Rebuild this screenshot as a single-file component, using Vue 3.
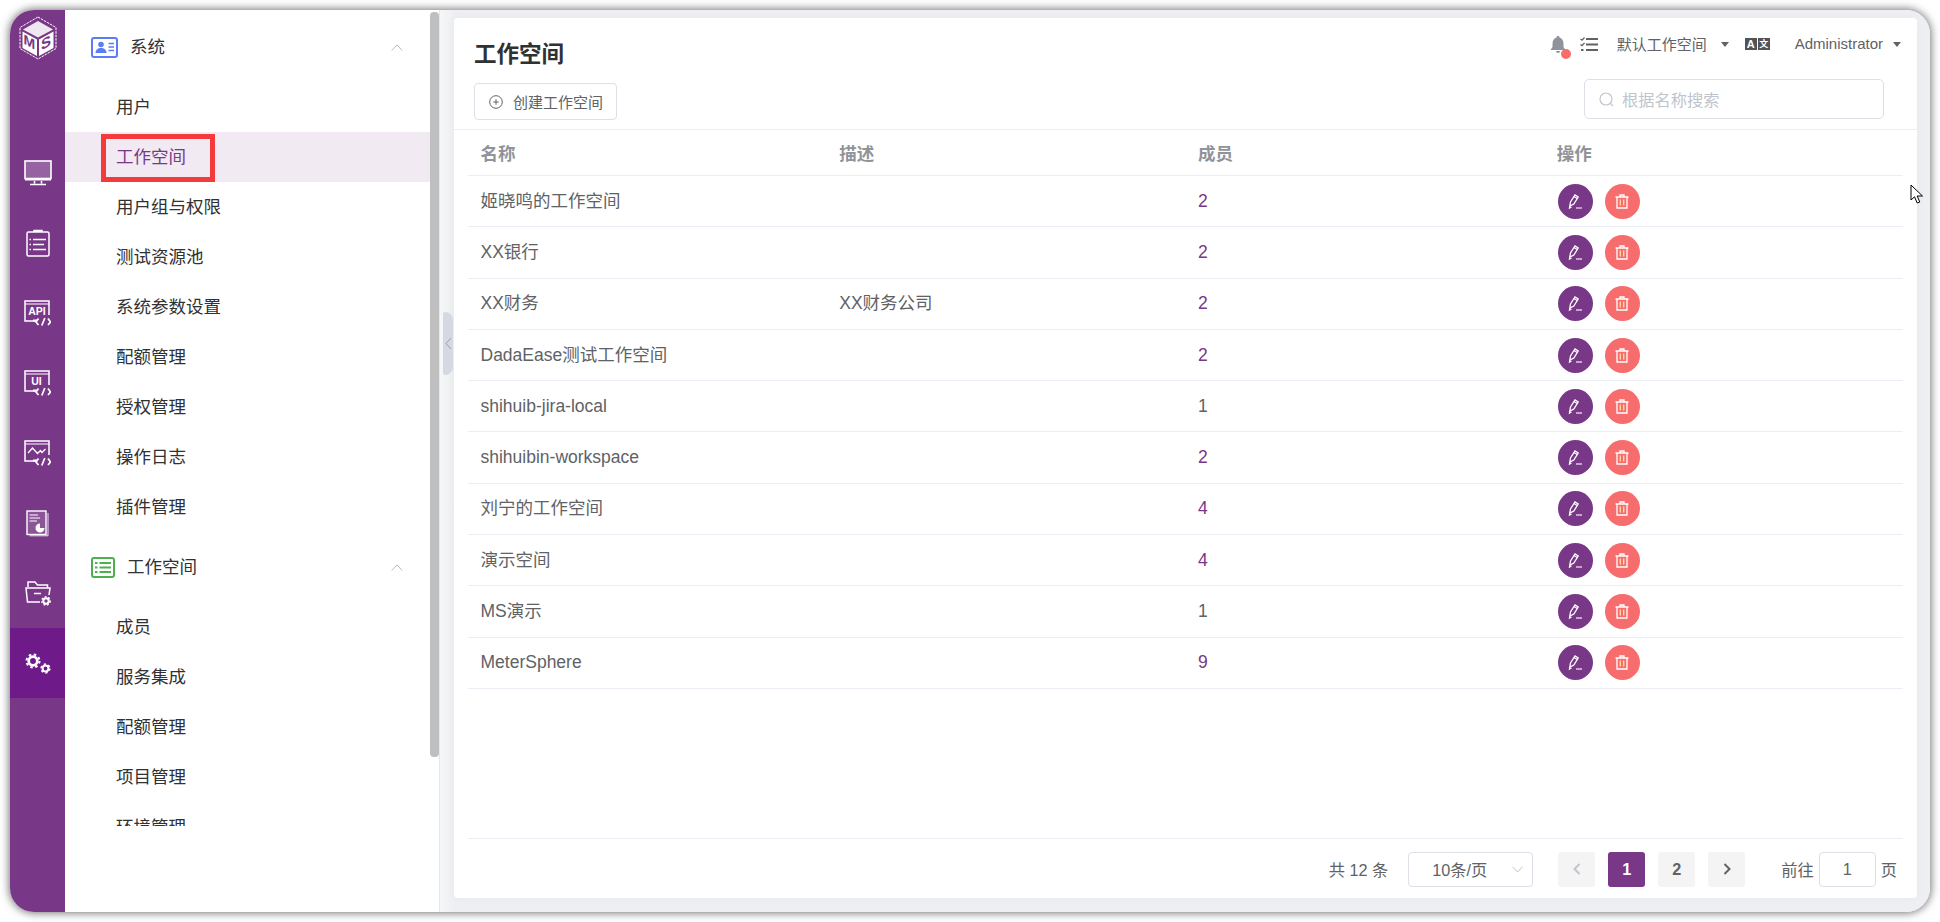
<script setup>
const railIcons = ['monitor', 'clip', 'api', 'ui', 'perf', 'report', 'folder', 'gear']
const group1 = ['用户', '工作空间', '用户组与权限', '测试资源池', '系统参数设置', '配额管理', '授权管理', '操作日志', '插件管理']
const group2 = ['成员', '服务集成', '配额管理', '项目管理', '环境管理']
const rows = [
  { name: '姬晓鸣的工作空间', desc: '', count: 2 },
  { name: 'XX银行', desc: '', count: 2 },
  { name: 'XX财务', desc: 'XX财务公司', count: 2 },
  { name: 'DadaEase测试工作空间', desc: '', count: 2 },
  { name: 'shihuib-jira-local', desc: '', count: 1 },
  { name: 'shihuibin-workspace', desc: '', count: 2 },
  { name: '刘宁的工作空间', desc: '', count: 4 },
  { name: '演示空间', desc: '', count: 4 },
  { name: 'MS演示', desc: '', count: 1 },
  { name: 'MeterSphere', desc: '', count: 9 }
]
const hasCjk = (text) => /[\u4e00-\u9fff]/.test(text)
</script>

<template>
  <div class="page">
    <div class="window">
      <nav class="rail">
        <div class="logo">
          <svg width="38" height="44" viewBox="0 0 38 44" fill="none" stroke="#fff">
            <path d="M19 1 37 11.500V32.500L19 43 1 32.500V11.500Z" stroke-width="1" stroke-dasharray="2.500 1" />
            <path d="M19 5 34 13.500 19 21.500 4 13.500Z" fill="#fff" fill-opacity=".88" stroke="none" />
            <path d="M3.500 15.500 18 23.500V40L3.500 32Z" fill="#fff" stroke="none" />
            <path d="M20 23.500 34.500 15.500V32L20 40Z" fill="#fff" stroke="none" />
            <text class="logo-text" transform="matrix(1 .55 0 1 4.500 27.500)">M</text>
            <text class="logo-text big" transform="matrix(1 -.55 0 1 22 34.600)">S</text>
          </svg>
        </div>
        <div v-for="icon in railIcons" :key="icon" class="rail-item" :class="{ active: icon === 'gear' }">
          <svg v-if="icon === 'monitor'" width="28" height="26" viewBox="0 0 28 26" fill="none" stroke="#fff" stroke-width="1.600">
            <rect x="1" y="1" width="26" height="17.500" fill="#fff" fill-opacity=".22" />
            <path d="M1 18.500H27V20.500H1Z" fill="#fff" stroke="none" />
            <path d="M10.500 21V23.500M17.500 21V23.500M6 24.500H22" />
          </svg>
          <svg v-else-if="icon === 'clip'" width="24" height="28" viewBox="0 0 24 28" fill="none" stroke="#fff" stroke-width="1.500">
            <rect x="1" y="3" width="22" height="24" rx="1.500" />
            <path d="M8 3V1.500H16V3" fill="#fff" />
            <path d="M7 10.500H20M7 15.500H18M7 20.500H20" />
            <path d="M3.500 10.500H5M3.500 15.500H5M3.500 20.500H5" />
          </svg>
          <svg v-else-if="icon === 'api' || icon === 'ui' || icon === 'perf'" width="27" height="26" viewBox="0 0 27 26" fill="none" stroke="#fff" stroke-width="1.500">
            <path d="M12 21H1V1H25V15" />
            <path d="M1 4H25" stroke-width="1" />
            <path d="M9 20.500H13" stroke-width="2" />
            <path d="M14.500 18.500 12 22 14.500 25M24 18.500 26.500 22 24 25M20.800 18 17.800 25.500" stroke-width="1.700" />
            <text v-if="icon === 'api'" x="13" y="14.800" class="rail-text" text-anchor="middle">API</text>
            <text v-else-if="icon === 'ui'" x="12.500" y="14.800" class="rail-text" text-anchor="middle">UI</text>
            <path v-else d="M4 13 8.500 8 13.500 13.500 16.500 10.500 18 12.500 21.500 9" stroke-width="1.300" />
          </svg>
          <svg v-else-if="icon === 'report'" width="24" height="27" viewBox="0 0 24 27" fill="none" stroke="#fff">
            <path d="M22 3V25.800H3.500" stroke-width="1" opacity=".85" />
            <rect x="1" y="1" width="19" height="23.500" stroke-width="1.400" fill="#fff" fill-opacity=".15" />
            <path d="M3.500 5H12M3.500 8H14M3.500 11H11" stroke-width="1.200" />
            <path d="M14 13.500A4.500 4.500 0 1 0 18.500 18H14Z" fill="#fff" stroke="none" />
          </svg>
          <svg v-else-if="icon === 'folder'" width="26" height="26" viewBox="0 0 26 26" fill="none" stroke="#fff" stroke-width="1.500">
            <path d="M3 7V2H10L12.500 5H22.500V8" />
            <path d="M15 22H2.500L1 8H25L24 15" />
            <path d="M9 13.500H16" stroke-width="1.500" />
            <circle cx="21" cy="21" r="2.700" stroke-width="2" />
            <circle cx="21" cy="21" r="4.200" stroke-width="1.500" stroke-dasharray="1.800 1.800" />
          </svg>
          <svg v-else width="26" height="21" viewBox="0 0 26 21" fill="none" stroke="#fff">
            <circle cx="8" cy="8" r="4.300" stroke-width="2.700" />
            <circle cx="8" cy="8" r="6.500" stroke-width="2" stroke-dasharray="2.550 2.550" />
            <circle cx="20.500" cy="15.500" r="2.900" stroke-width="2" />
            <circle cx="20.500" cy="15.500" r="4.400" stroke-width="1.500" stroke-dasharray="2.300 2.300" />
          </svg>
        </div>
      </nav>

      <aside class="aside">
        <div class="menu">
          <div class="group-title first">
            <svg class="group-icon" width="27" height="21" viewBox="0 0 27 21" fill="none">
              <rect x="1" y="1" width="25" height="19" rx="2" stroke="#5b7cf7" stroke-width="2" />
              <circle cx="10" cy="7.500" r="2.800" fill="#5b7cf7" />
              <path d="M4.500 16C4.500 12.500 7 11 10 11S15.500 12.500 15.500 16Z" fill="#5b7cf7" />
              <path d="M17.500 6.500H23M17.500 10H23M17.500 13.500H23" stroke="#5b7cf7" stroke-width="1.500" />
            </svg>
            <span class="group-name">系统</span>
            <svg class="chev" width="12" height="7" viewBox="0 0 12 7" fill="none" stroke="#b4b8c0" stroke-width="1"><path d="M.8 6.500 6 1 11.200 6.500" /></svg>
          </div>
          <div v-for="item in group1" :key="item" class="menu-item" :class="{ current: item === '工作空间' }">
            <span>{{ item }}</span>
            <i v-if="item === '工作空间'" class="mark"></i>
          </div>
          <div class="group-title second">
            <svg class="group-icon" width="24" height="21" viewBox="0 0 24 21" fill="none">
              <rect x="1" y="1" width="22" height="19" rx="2" stroke="#4caf50" stroke-width="2" />
              <path d="M8.500 6H20M8.500 10.500H20M8.500 15H20" stroke="#4caf50" stroke-width="2" />
              <path d="M4 6H6.500M4 10.500H6.500M4 15H6.500" stroke="#4caf50" stroke-width="2" />
            </svg>
            <span class="group-name narrow">工作空间</span>
            <svg class="chev" width="12" height="7" viewBox="0 0 12 7" fill="none" stroke="#b4b8c0" stroke-width="1"><path d="M.8 6.500 6 1 11.200 6.500" /></svg>
          </div>
          <div v-for="item in group2" :key="item" class="menu-item"><span>{{ item }}</span></div>
        </div>
        <div class="scrollbar"></div>
      </aside>

      <main class="main">
        <div class="handle">
          <svg width="7" height="13" viewBox="0 0 7 13" fill="none" stroke="#9a9ea8" stroke-width="1"><path d="M6 1 1 6.500 6 12" /></svg>
        </div>
        <section class="card">
          <header class="head">
            <div class="head-left">
              <h1 class="title">工作空间</h1>
              <button class="create">
                <svg width="14" height="14" viewBox="0 0 14 14" fill="none" stroke="#606266" stroke-width="1"><circle cx="7" cy="7" r="6.300" /><path d="M7 4.200V9.800M4.200 7H9.800" /></svg>
                <span>创建工作空间</span>
              </button>
            </div>
            <div class="head-right">
              <div class="tools">
                <div class="bell">
                  <svg width="16" height="18" viewBox="0 0 16 18" fill="#909399"><path d="M8 0C9 0 9.500 .6 9.500 1.500 12.500 2.300 13.500 5 13.500 8V11L15.500 14H.5L2.500 11V8C2.500 5 3.500 2.300 6.500 1.500 6.500 .6 7 0 8 0ZM6 15H10C10 16.200 9.200 17 8 17S6 16.200 6 15Z" /></svg>
                  <i class="dot"></i>
                </div>
                <svg class="tasks" width="18" height="15" viewBox="0 0 18 15" fill="none" stroke="#606266" stroke-width="2">
                  <path d="M6 2H18M6 7.500H18M6 13H18" />
                  <path d="M.5 2 2 3.200 4.500 .5M.5 7.500 2 8.700 4.500 6" stroke-width="1.300" />
                  <path d="M1 13H3.500" />
                </svg>
                <span class="tool-label">默认工作空间</span>
                <i class="caret wide"></i>
                <div class="lang"><span class="lang-a">A</span><span class="lang-b">文</span></div>
                <span class="tool-label admin">Administrator</span>
                <i class="caret"></i>
              </div>
              <div class="search">
                <svg width="15" height="15" viewBox="0 0 15 15" fill="none" stroke="#c0c4cc" stroke-width="1.200"><circle cx="7" cy="7" r="6" /><path d="M11.500 11.500 14.200 14.200" /></svg>
                <span>根据名称搜索</span>
              </div>
            </div>
          </header>

          <div class="table">
            <div class="tr th">
              <div class="td">名称</div>
              <div class="td">描述</div>
              <div class="td">成员</div>
              <div class="td">操作</div>
            </div>
            <div v-for="row in rows" :key="row.name" class="tr">
              <div class="td" :class="{ cjk: hasCjk(row.name) }">{{ row.name }}</div>
              <div class="td" :class="{ cjk: hasCjk(row.desc) }">{{ row.desc }}</div>
              <div class="td" :class="{ link: row.count > 1 }">{{ row.count }}</div>
              <div class="td ops">
                <span class="round edit">
                  <svg width="17" height="17" viewBox="0 0 17 17" fill="none" stroke="#fff" stroke-width="1.300">
                    <path d="M2.800 13 3.500 9 8 2 11.200 4 6.800 11Z" />
                    <path d="M7 3.500 10.200 5.500" />
                    <path d="M9 15H15" stroke-width="1.100" />
                    <path d="M2.800 13 2.500 15 4.500 14" />
                  </svg>
                </span>
                <span class="round del">
                  <svg width="14" height="15" viewBox="0 0 14 15" fill="none" stroke="#fff" stroke-width="1.300">
                    <path d="M.5 3H13.500M5 3V1H9V3" />
                    <path d="M2 3V14H12V3" />
                    <path d="M5.300 5.500V11.500M8.700 5.500V11.500" stroke="#ffe0a0" />
                  </svg>
                </span>
              </div>
            </div>
          </div>

          <footer class="pager">
            <span class="total">共 12 条</span>
            <div class="size">
              <span>10条/页</span>
              <svg width="11" height="7" viewBox="0 0 11 7" fill="none" stroke="#c0c4cc" stroke-width="1"><path d="M.5 .8 5.500 6 10.500 .8" /></svg>
            </div>
            <div class="pages">
              <span class="pg">
                <svg width="8" height="12" viewBox="0 0 8 12" fill="none" stroke="#c0c4cc" stroke-width="2"><path d="M6.500 1 1.500 6 6.500 11" /></svg>
              </span>
              <span class="pg on">1</span>
              <span class="pg">2</span>
              <span class="pg">
                <svg width="8" height="12" viewBox="0 0 8 12" fill="none" stroke="#606266" stroke-width="2"><path d="M1.500 1 6.500 6 1.500 11" /></svg>
              </span>
            </div>
            <div class="jump">
              <span>前往</span>
              <span class="jump-box">1</span>
              <span>页</span>
            </div>
          </footer>
        </section>
        <svg class="cursor" width="14" height="20" viewBox="0 0 14 20" fill="#fff" stroke="#000" stroke-width="1"><path d="M1 1V16L4.500 12.800 7.200 19 9.800 18 7.200 12H12.500Z" /></svg>
      </main>
    </div>
  </div>
</template>

<style>
html, body { margin: 0; background: #fff; }
</style>

<style scoped>
.page {
  width: 1940px;
  height: 922px;
  padding: 10px;
  box-sizing: border-box;
  overflow: hidden;
  font-family: "Liberation Sans", "Noto Sans CJK SC", sans-serif;
  color: #606266;
}
.window {
  width: 1920px;
  height: 902px;
  display: flex;
  border-radius: 24px;
  overflow: hidden;
  box-shadow: 0 0 8px 1px rgba(0, 0, 0, .55);
}
.rail {
  width: 55px;
  flex: none;
  background: #783887;
}
.logo {
  height: 128px;
  box-sizing: border-box;
  padding: 6px 0 0 9px;
}
.logo svg { display: block; }
.logo-text {
  font-family: "Liberation Sans", sans-serif;
  font-size: 14px;
  font-weight: 700;
  fill: #783887;
  stroke: none;
}
.logo-text.big { font-size: 15px; }
.rail-item {
  height: 70px;
  display: flex;
  align-items: center;
  justify-content: center;
}
.rail-item.active { background: #6f1a89; }
.rail-text {
  font-family: "Liberation Sans", sans-serif;
  font-size: 10.500px;
  font-weight: 700;
  fill: #fff;
  stroke: none;
}
.aside {
  width: 375px;
  flex: none;
  background: #fff;
  border-right: 1px solid #e6e6e6;
  box-sizing: border-box;
  position: relative;
  height: 902px;
}
.menu {
  height: 816px;
  overflow: hidden;
  color: #303133;
  font-size: 17.500px;
}
.group-title {
  height: 50px;
  display: flex;
  align-items: center;
  padding-left: 26px;
  padding-right: 36px;
}
.group-title.first { margin-top: 12px; margin-bottom: 10px; }
.group-title.second { margin-top: 10px; margin-bottom: 10px; }
.group-icon { flex: none; }
.group-name { margin-left: 12px; flex: 1; padding-bottom: 3px; }
.group-name.narrow { margin-left: 12px; }
.menu-item {
  height: 50px;
  display: flex;
  align-items: center;
  padding-left: 51px;
  padding-bottom: 4px;
  box-sizing: border-box;
  position: relative;
}
.menu-item.current {
  background: #f1eaf3;
  color: #783887;
}
.mark {
  position: absolute;
  left: 36px;
  top: 2px;
  width: 114px;
  height: 48px;
  box-sizing: border-box;
  border: 5px solid #f53a3c;
}
.scrollbar {
  position: absolute;
  right: 0;
  top: 2px;
  width: 9px;
  height: 745px;
  background: #bfbfbf;
  border-radius: 4px;
}
.main {
  flex: 1;
  min-width: 0;
  background: linear-gradient(90deg, #f6f7f9 0, #edeff2 14px);
  position: relative;
  padding: 8px 13px 14px 14px;
  box-sizing: border-box;
  display: flex;
}
.handle {
  position: absolute;
  left: 3px;
  top: 302px;
  width: 10px;
  height: 63px;
  background: #d6d9e2;
  border-radius: 2px 8px 8px 2px;
  display: flex;
  align-items: center;
  justify-content: center;
}
.card {
  flex: 1;
  min-width: 0;
  background: #fff;
  border-radius: 4px;
  display: flex;
  flex-direction: column;
  box-shadow: 0 0 12px rgba(0, 0, 0, .03);
}
.head {
  height: 112px;
  flex: none;
  box-sizing: border-box;
  border-bottom: 1px solid #ebeef5;
  display: flex;
  justify-content: space-between;
  padding: 0 20px 0 20px;
}
.head-left { display: flex; flex-direction: column; align-items: flex-start; }
.title {
  margin: 23px 0 0;
  font-size: 22.500px;
  line-height: 28px;
  font-weight: 700;
  color: #303133;
}
.create {
  margin-top: 14px;
  width: 143px;
  height: 37px;
  padding: 0 0 0 14px;
  border: 1px solid #dcdfe6;
  border-radius: 4px;
  background: #fff;
  display: flex;
  align-items: center;
  gap: 10px;
  font: inherit;
  font-size: 15px;
  color: #606266;
}
.head-right { display: flex; flex-direction: column; align-items: flex-end; }
.tools {
  display: flex;
  align-items: center;
  height: 20px;
  margin-top: 16px;
  font-size: 15px;
  margin-right: -4px;
  margin-left: auto;
}
.tool-label { padding-bottom: 2px; }
.bell { position: relative; width: 16px; height: 18px; margin-right: 14px; top: 1px; }
.bell svg { display: block; }
.dot {
  position: absolute;
  left: 11px;
  top: 13px;
  width: 10px;
  height: 10px;
  border-radius: 50%;
  background: #f76c6c;
}
.tasks { margin-right: 19px; }
.caret {
  width: 0;
  height: 0;
  border-left: 4.500px solid transparent;
  border-right: 4.500px solid transparent;
  border-top: 5.500px solid #606266;
  margin-left: 10px;
}
.caret.wide { margin-left: 14px; margin-right: 16px; }
.lang { display: flex; width: 25px; height: 12px; font-size: 11px; font-weight: 700; color: #fff; line-height: 12px; text-align: center; gap: 1px; }
.lang-a { flex: 1; background: #505358; }
.lang-b { flex: 1; background: #505358; font-size: 9px; }
.admin { margin-left: 25px; }
.search {
  margin-top: 25px;
  margin-right: 13px;
  width: 300px;
  height: 40px;
  box-sizing: border-box;
  border: 1px solid #dcdfe6;
  border-radius: 5px;
  display: flex;
  align-items: center;
  gap: 8px;
  padding-left: 14px;
  font-size: 16.250px;
  color: #c0c4cc;
}
.table {
  flex: 1;
  margin: 0 14px;
  border-bottom: 1px solid #ebeef5;
  font-size: 17.500px;
}
.tr {
  display: grid;
  grid-template-columns: repeat(4, 1fr);
  height: 51.300px;
  box-sizing: border-box;
  border-bottom: 1px solid #ebeef5;
  align-items: center;
}
.tr.th {
  height: 46px;
  font-weight: 700;
  color: #909399;
}
.td { padding: 0 12.500px; }
.td.cjk { padding-bottom: 4px; }
.link { color: #783887; }
.ops { display: flex; gap: 12px; padding-left: 13.500px; }
.round {
  width: 35px;
  height: 35px;
  border-radius: 50%;
  display: flex;
  align-items: center;
  justify-content: center;
}
.edit { background: #783887; }
.del { background: #f76c6c; }
.pager {
  height: 58px;
  flex: none;
  display: flex;
  align-items: center;
  padding: 1px 20px 0 0;
  justify-content: flex-end;
  font-size: 16.250px;
}
.size {
  margin-left: 20px;
  width: 125px;
  height: 35px;
  box-sizing: border-box;
  border: 1px solid #dcdfe6;
  border-radius: 4px;
  display: flex;
  align-items: center;
  justify-content: space-between;
  padding: 0 9px 0 23px;
}
.pages { display: flex; gap: 13px; margin-left: 25px; }
.pg {
  width: 37px;
  height: 35px;
  background: #f4f4f5;
  border-radius: 3px;
  display: flex;
  align-items: center;
  justify-content: center;
  font-weight: 700;
}
.pg.on { background: #783887; color: #fff; }
.jump { display: flex; align-items: center; gap: 5px; margin-left: 36px; }
.jump-box {
  width: 57px;
  height: 35px;
  box-sizing: border-box;
  border: 1px solid #dcdfe6;
  border-radius: 4px;
  display: flex;
  align-items: center;
  justify-content: center;
}
.cursor {
  position: absolute;
  left: 1470px;
  top: 174px;
}
</style>
